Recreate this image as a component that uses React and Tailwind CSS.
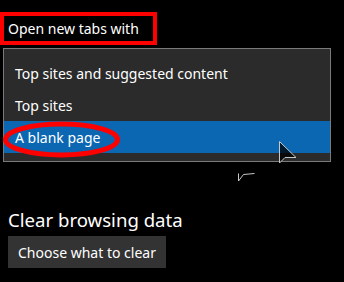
import React from 'react';

const font = { fontFamily: '"Noto Sans", "Open Sans", sans-serif' };

const options = ['Top sites and suggested content', 'Top sites', 'A blank page'];

const App = () => {
  const selected = 2;

  return (
    <div className="relative w-[344px] h-[282px] bg-black text-white overflow-hidden" style={font}>
      <div className="pt-3">
        <div className="w-[157px] h-[33px] border-4 border-[#ff0000] flex items-center pl-1 text-[14px]">
          Open new tabs with
        </div>
      </div>

      <div className="mt-[3px] ml-[3px] w-[328px] border border-[#7a7a7a] bg-[#2b2b2b] py-2">
        {options.map((opt, i) => (
          <div
            key={opt}
            className={`h-8 flex items-center pl-[11px] text-[14px] ${i === selected ? 'bg-[#0b67b2]' : ''}`}
          >
            {opt}
          </div>
        ))}
      </div>

      <div className="mt-[46px] pl-2">
        <h3 className="text-[18.6px] leading-6">Clear browsing data</h3>
        <button className="mt-1 h-8 px-[10px] bg-[#333333] text-[14px] text-white">
          Choose what to clear
        </button>
      </div>

      {/* annotation + cursor overlay */}
      <svg className="absolute left-0 top-0 pointer-events-none" width="344" height="282">
        <ellipse cx="61.5" cy="139.5" rx="56" ry="15.5" fill="none" stroke="#ff0000" strokeWidth="5" />
        <polygon points="279.5,141.5 279.5,163 285,157.5 296,157.5" fill="rgba(0,0,0,0.75)" stroke="#c8c8c8" strokeWidth="1" />
        <polyline points="238.5,173.5 238.5,181 243.5,174.5 254.5,173.5" fill="none" stroke="#c8c8c8" strokeWidth="1" />
      </svg>
    </div>
  );
};

export default App;
